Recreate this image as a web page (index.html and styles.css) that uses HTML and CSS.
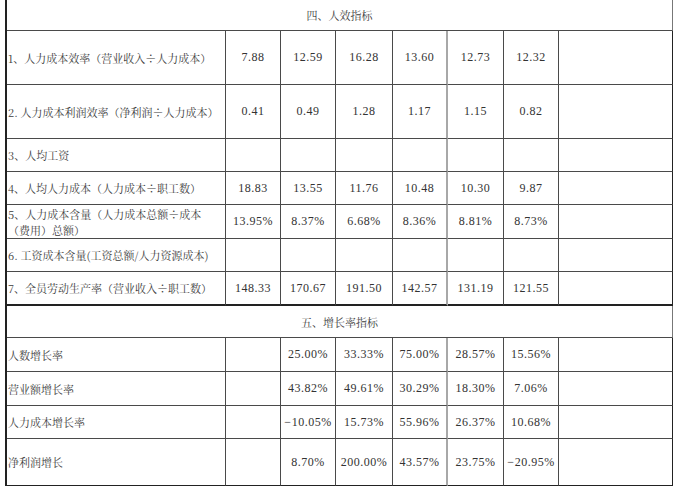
FILE: index.html
```html
<!DOCTYPE html>
<html lang="zh-CN">
<head>
<meta charset="utf-8">
<title>人效指标</title>
<link rel="stylesheet" href="styles.css">
</head>
<body>
<div class="sheet">
  <div class="row head first"><div class="cell hd">四、人效指标</div></div>

  <div class="row tall">
    <div class="cell lbl">1、人力成本效率（营业收入÷人力成本）</div>
    <div class="cell num">7.88</div>
    <div class="cell num">12.59</div>
    <div class="cell num">16.28</div>
    <div class="cell num">13.60</div>
    <div class="cell num">12.73</div>
    <div class="cell num">12.32</div>
    <div class="cell"></div>
  </div>

  <div class="row tall">
    <div class="cell lbl">2. 人力成本利润效率（净利润÷人力成本）</div>
    <div class="cell num">0.41</div>
    <div class="cell num">0.49</div>
    <div class="cell num">1.28</div>
    <div class="cell num">1.17</div>
    <div class="cell num">1.15</div>
    <div class="cell num">0.82</div>
    <div class="cell"></div>
  </div>

  <div class="row">
    <div class="cell lbl">3、人均工资</div>
    <div class="cell"></div>
    <div class="cell"></div>
    <div class="cell"></div>
    <div class="cell"></div>
    <div class="cell"></div>
    <div class="cell"></div>
    <div class="cell"></div>
  </div>

  <div class="row">
    <div class="cell lbl">4、人均人力成本（人力成本÷职工数）</div>
    <div class="cell num">18.83</div>
    <div class="cell num">13.55</div>
    <div class="cell num">11.76</div>
    <div class="cell num">10.48</div>
    <div class="cell num">10.30</div>
    <div class="cell num">9.87</div>
    <div class="cell"></div>
  </div>

  <div class="row h34">
    <div class="cell lbl two">5、人力成本含量（人力成本总额÷成本<br>（费用）总额）</div>
    <div class="cell num">13.95%</div>
    <div class="cell num">8.37%</div>
    <div class="cell num">6.68%</div>
    <div class="cell num">8.36%</div>
    <div class="cell num">8.81%</div>
    <div class="cell num">8.73%</div>
    <div class="cell"></div>
  </div>

  <div class="row">
    <div class="cell lbl">6. 工资成本含量(工资总额/人力资源成本)</div>
    <div class="cell"></div>
    <div class="cell"></div>
    <div class="cell"></div>
    <div class="cell"></div>
    <div class="cell"></div>
    <div class="cell"></div>
    <div class="cell"></div>
  </div>

  <div class="row h34 thick">
    <div class="cell lbl">7、全员劳动生产率（营业收入÷职工数）</div>
    <div class="cell num">148.33</div>
    <div class="cell num">170.67</div>
    <div class="cell num">191.50</div>
    <div class="cell num">142.57</div>
    <div class="cell num">131.19</div>
    <div class="cell num">121.55</div>
    <div class="cell"></div>
  </div>

  <div class="row head second"><div class="cell hd">五、增长率指标</div></div>

  <div class="row h34">
    <div class="cell lbl">人数增长率</div>
    <div class="cell"></div>
    <div class="cell num">25.00%</div>
    <div class="cell num">33.33%</div>
    <div class="cell num">75.00%</div>
    <div class="cell num">28.57%</div>
    <div class="cell num">15.56%</div>
    <div class="cell"></div>
  </div>

  <div class="row h34">
    <div class="cell lbl">营业额增长率</div>
    <div class="cell"></div>
    <div class="cell num">43.82%</div>
    <div class="cell num">49.61%</div>
    <div class="cell num">30.29%</div>
    <div class="cell num">18.30%</div>
    <div class="cell num">7.06%</div>
    <div class="cell"></div>
  </div>

  <div class="row">
    <div class="cell lbl">人力成本增长率</div>
    <div class="cell"></div>
    <div class="cell num">−10.05%</div>
    <div class="cell num">15.73%</div>
    <div class="cell num">55.96%</div>
    <div class="cell num">26.37%</div>
    <div class="cell num">10.68%</div>
    <div class="cell"></div>
  </div>

  <div class="row end">
    <div class="cell lbl">净利润增长</div>
    <div class="cell"></div>
    <div class="cell num">8.70%</div>
    <div class="cell num">200.00%</div>
    <div class="cell num">43.57%</div>
    <div class="cell num">23.75%</div>
    <div class="cell num">−20.95%</div>
    <div class="cell"></div>
  </div>
</div>
</body>
</html>
```

FILE: styles.css
```css
* {
  box-sizing: border-box;
  margin: 0;
  padding: 0;
}

html,
body {
  background: #ffffff;
}

body {
  margin: 0;
  font-family: "Noto Serif CJK SC", "Noto Sans CJK SC", "Liberation Serif", serif;
  font-size: 11px;
  color: #3c3c3c;
}

.sheet {
  margin-left: 5px;
  width: 668px;
  border-left: 2px solid #222222;
}

.row {
  display: grid;
  grid-template-columns: 219px 55px 55px 57px 55px 56px 55px 114px;
  height: 33px;
}

.row.tall {
  height: 54px;
}

.row.h34 {
  height: 34px;
}

.row.head {
  grid-template-columns: 1fr;
}

.row.head.first {
  height: 31px;
}

.row.head.second {
  height: 32px;
}

.row.end {
  height: 47px;
}

.cell {
  border-right: 1px solid #4a4a4a;
  border-bottom: 1px solid #4a4a4a;
  display: flex;
  align-items: center;
  justify-content: center;
  white-space: nowrap;
}

.row > .cell:nth-child(5) {
  border-right: 2px solid #a8a8a8;
}

.row > .cell:last-child {
  border-right: 1px solid #222222;
}

.row.head > .cell.hd {
  border-right: 1px solid #777777;
}

.row.thick > .cell {
  border-bottom: 2px solid #222222;
}

.row.end > .cell {
  border-bottom: 1px solid #222222;
}

.lbl {
  justify-content: flex-start;
  padding-left: 1px;
}

.lbl.two {
  line-height: 16px;
  padding-top: 1px;
}

.num {
  font-family: "Liberation Serif", serif;
  font-size: 12px;
  letter-spacing: 0.5px;
  color: #333333;
}
```
